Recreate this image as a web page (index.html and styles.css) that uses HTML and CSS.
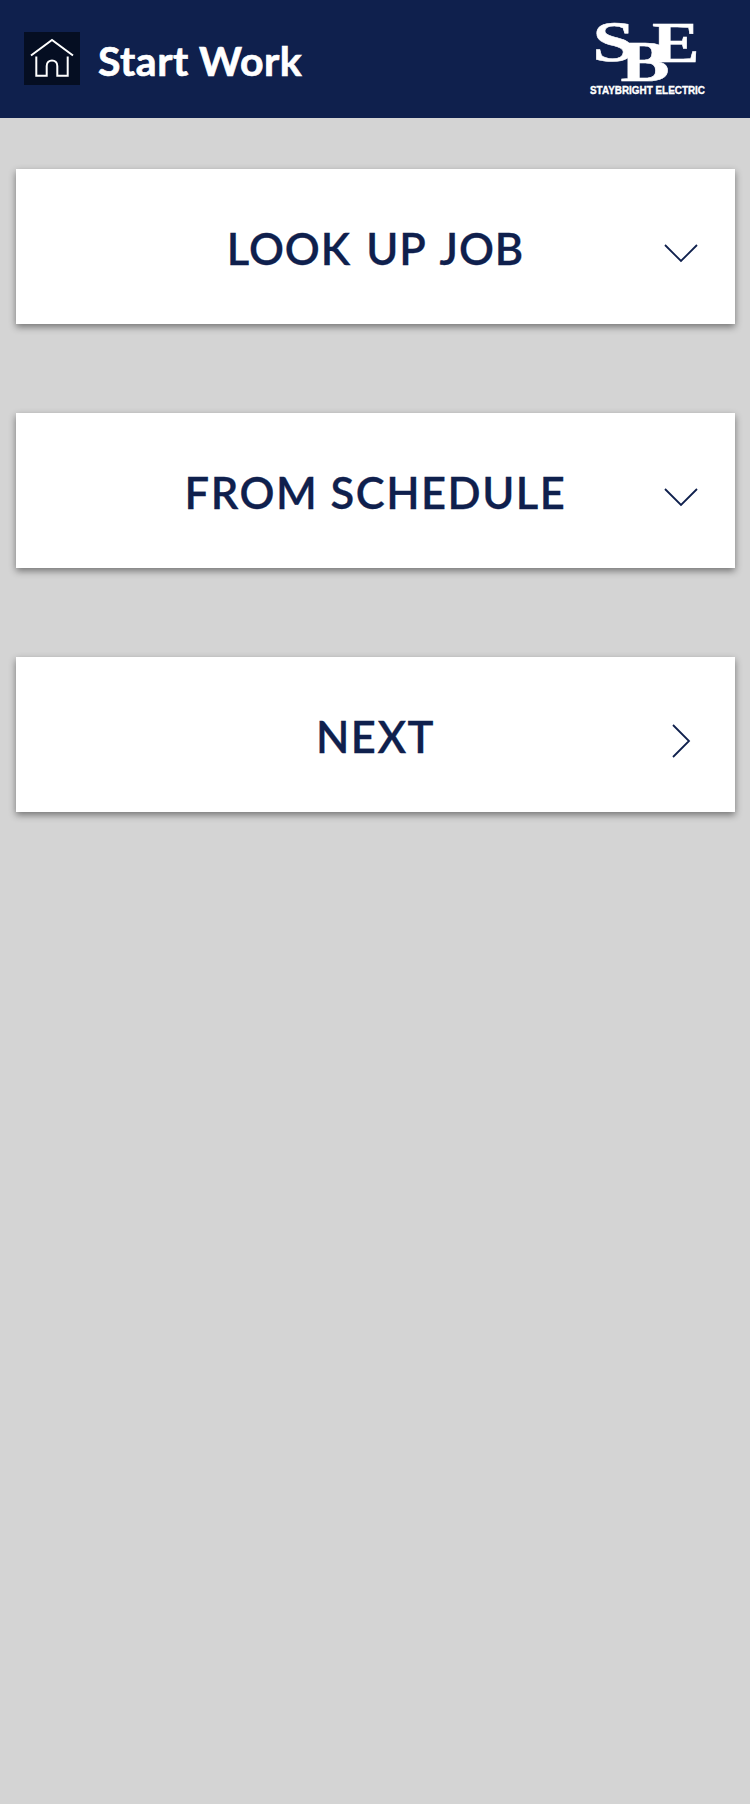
FILE: index.html
```html
<!DOCTYPE html>
<html lang="en">
<head>
<meta charset="utf-8">
<title>Start Work</title>
<link rel="stylesheet" href="styles.css">
</head>
<body>
<header class="header">
  <a class="home" aria-label="Home">
    <svg width="56" height="53" viewBox="0 0 56 53">
      <path d="M7 23.500 28 8 49 23.500M12.300 24.500V43.800H22.700V34C22.700 26.500 33.300 26.500 33.300 34V43.800H43.700V24.500"/>
    </svg>
  </a>
  <h1 class="title">Start Work</h1>
  <svg class="logo" width="120" height="80" viewBox="588 19 120 80" role="img" aria-label="Staybright Electric">
    <g class="logo-mark">
      <text transform="translate(592.500 61) scale(1.340 1)" font-size="56.500">S</text>
      <text transform="translate(620.500 81) scale(1.290 1)" font-size="57">B</text>
      <text transform="translate(652 62) scale(1.250 1)" font-size="57">E</text>
    </g>
    <text class="logo-name" x="590" y="93.700" textLength="115" lengthAdjust="spacingAndGlyphs">STAYBRIGHT ELECTRIC</text>
  </svg>
</header>
<main class="menu">
  <button class="card">
    <span class="label lookup">LOOK UP JOB</span>
    <svg class="chevron" width="34" height="34" viewBox="0 0 34 34"><path d="M1 9 17 25 33 9"/></svg>
  </button>
  <button class="card">
    <span class="label">FROM SCHEDULE</span>
    <svg class="chevron" width="34" height="34" viewBox="0 0 34 34"><path d="M1 9 17 25 33 9"/></svg>
  </button>
  <button class="card">
    <span class="label">NEXT</span>
    <svg class="chevron" width="34" height="34" viewBox="0 0 34 34"><path d="M9 1 25 17 9 33"/></svg>
  </button>
</main>
</body>
</html>
```
FILE: styles.css
```css
body {
  margin: 0;
  min-height: 1804px;
  background: #d4d4d4;
  font-family: Lato, sans-serif;
}
.header {
  box-sizing: border-box;
  height: 118px;
  padding: 0 42px 1px 24px;
  display: flex;
  align-items: center;
  background: #0f204d;
  color: #fff;
}
.home {
  display: flex;
  margin-right: 18px;
  background: #050e22;
}
.home path {
  fill: none;
  stroke: #fff;
  stroke-width: 2;
}
.title {
  margin: 5px 0 0;
  font-size: 41px;
  font-weight: 700;
  line-height: 50px;
  letter-spacing: 0.5px;
  -webkit-text-stroke: 0.700px #fff;
}
.logo {
  margin-left: auto;
  overflow: visible;
  fill: #fff;
}
.logo-mark {
  font-family: "Liberation Serif", serif;
  font-weight: 700;
  stroke: #fff;
  stroke-width: 0.5;
}
.logo-name {
  font: 700 11.500px "Liberation Sans", sans-serif;
  stroke: #fff;
  stroke-width: 0.4;
}
.menu {
  padding: 51px 15px 0 16px;
  display: grid;
  gap: 89px;
}
.card {
  height: 155px;
  padding: 5px 37px 0;
  border: 0;
  display: grid;
  grid-template-columns: 34px 1fr 34px;
  align-items: center;
  background: #fff;
  box-shadow: 0 3px 7px rgba(0, 0, 0, 0.45);
  color: #0f204d;
  font-family: inherit;
}
.label {
  grid-column: 2;
  margin-top: -2px;
  font-size: 43.500px;
  font-weight: 600;
  line-height: 52px;
  letter-spacing: 1.500px;
  white-space: nowrap;
  -webkit-text-stroke: 0.300px #0f204d;
}
.lookup {
  letter-spacing: 0.900px;
  word-spacing: 3.500px;
}
.chevron {
  margin-top: 8px;
}
.chevron path {
  fill: none;
  stroke: #0f204d;
  stroke-width: 1.800;
}
```
